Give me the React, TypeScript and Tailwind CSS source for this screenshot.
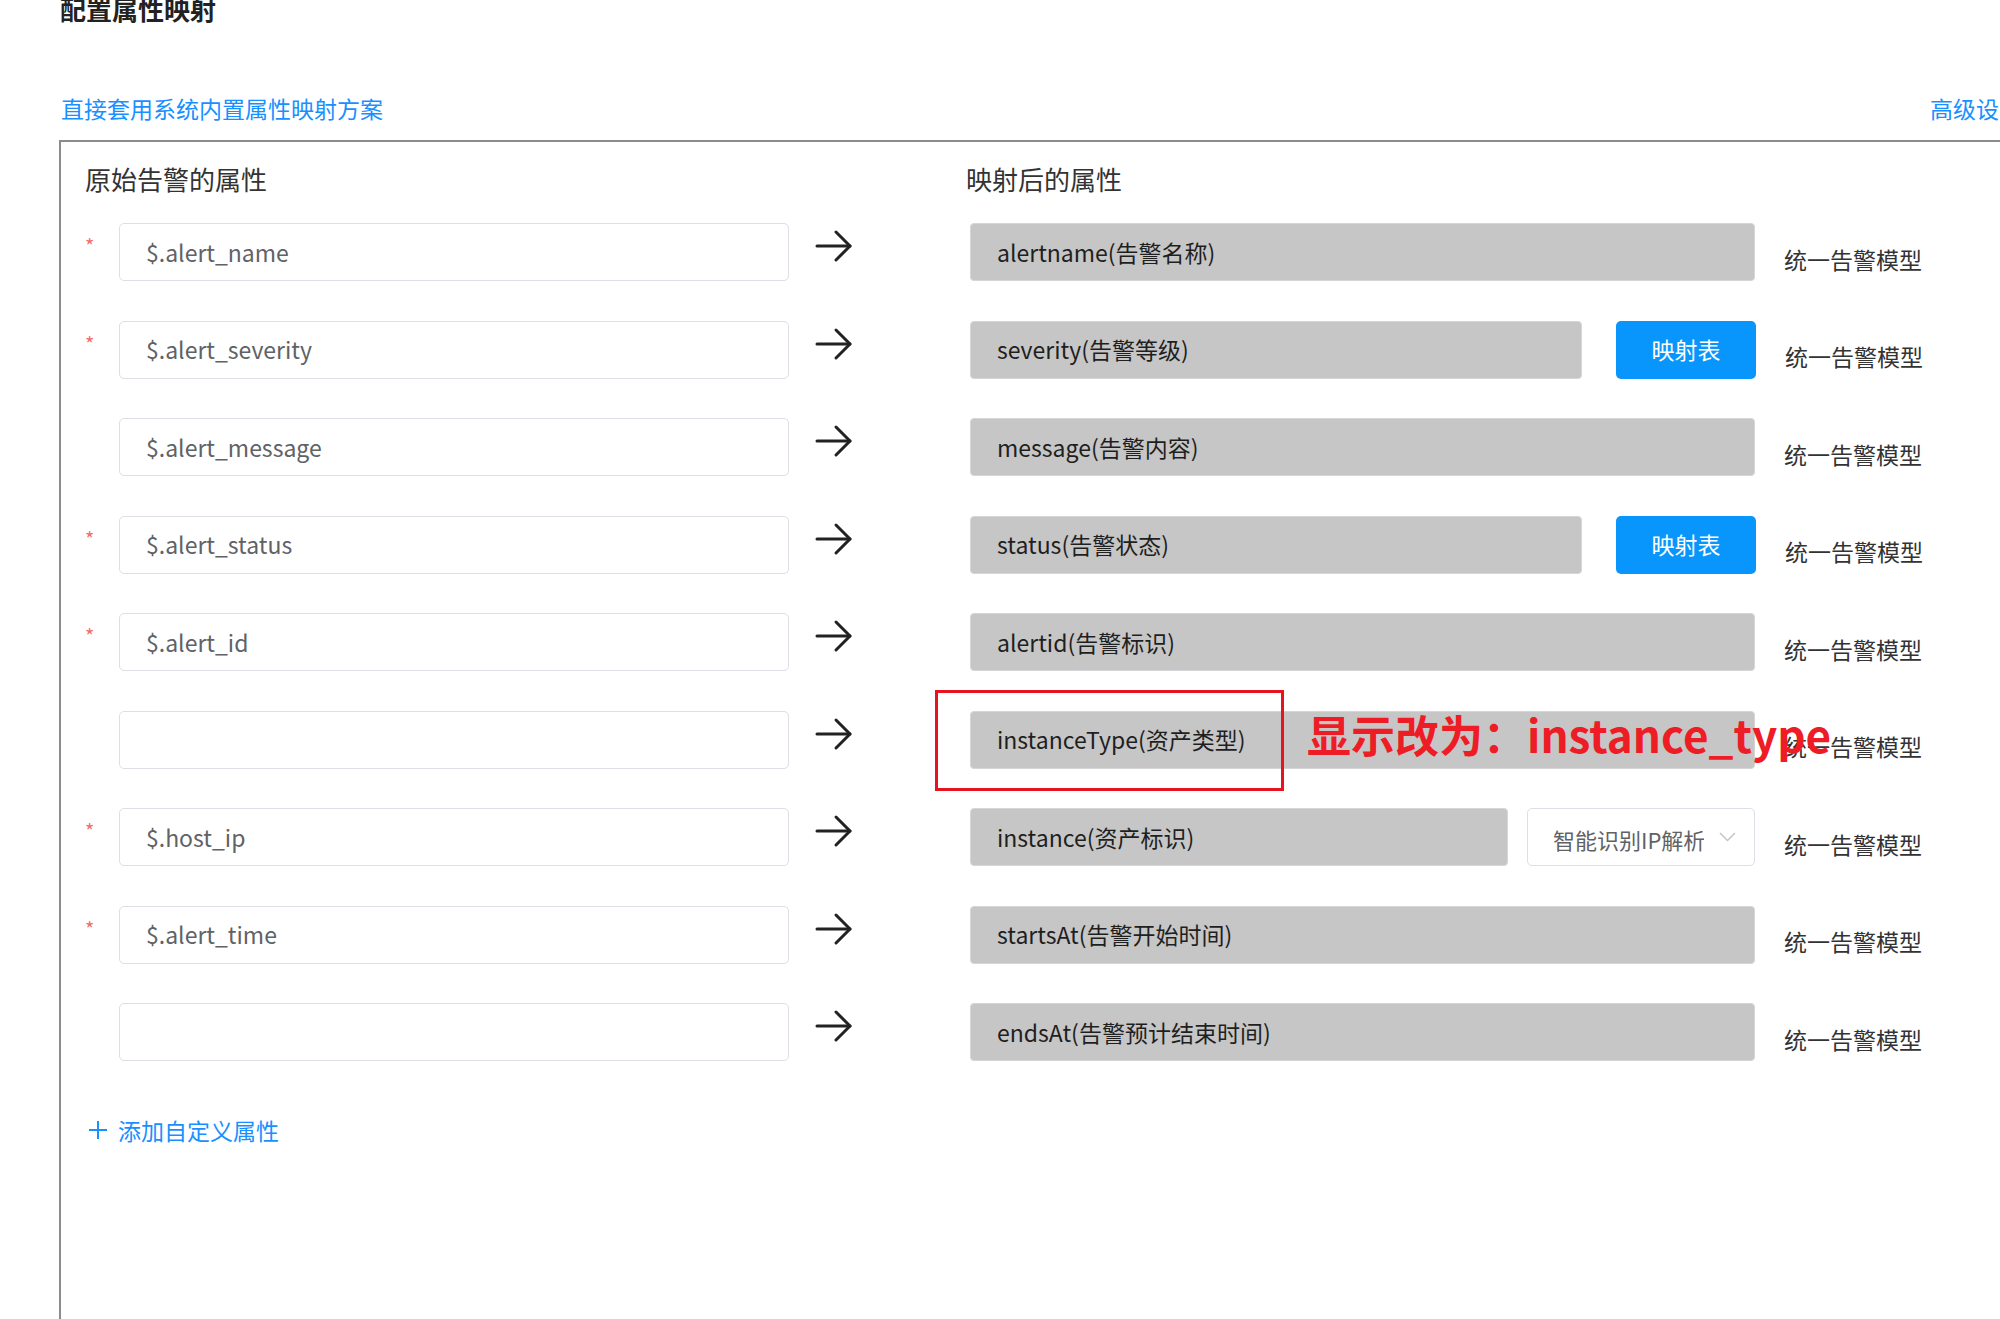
import type React from "react";

type Row = {
  required: boolean;
  source: string;
  target: string;
  extra?: "button" | "select";
};

const rows: Row[] = [
  { required: true, source: "$.alert_name", target: "alertname(告警名称)" },
  { required: true, source: "$.alert_severity", target: "severity(告警等级)", extra: "button" },
  { required: false, source: "$.alert_message", target: "message(告警内容)" },
  { required: true, source: "$.alert_status", target: "status(告警状态)", extra: "button" },
  { required: true, source: "$.alert_id", target: "alertid(告警标识)" },
  { required: false, source: "", target: "instanceType(资产类型)" },
  { required: true, source: "$.host_ip", target: "instance(资产标识)", extra: "select" },
  { required: true, source: "$.alert_time", target: "startsAt(告警开始时间)" },
  { required: false, source: "", target: "endsAt(告警预计结束时间)" },
];

const ArrowRight = () => (
  <svg width="38" height="34" viewBox="0 0 38 34" fill="none" stroke="#222" strokeWidth={3} strokeLinecap="round" strokeLinejoin="round">
    <path d="M2 17h33" />
    <path d="M21 3l14 14-14 14" />
  </svg>
);

const MappingRow: React.FC<{ row: Row }> = ({ row }) => {
  const grayWidth = row.extra === "button" ? "w-[612px]" : row.extra === "select" ? "w-[538px]" : "w-[785px]";

  return (
    <div className="flex items-center h-[58px]">
      <div className="w-[58px] pl-[24px] self-start pt-[13px] text-[20px] leading-[20px] text-[#f56c6c]">
        {row.required ? "*" : ""}
      </div>
      <div className="w-[670px] h-[58px] rounded-[5px] border border-[#dcdfe6] bg-white flex items-center pl-[26px] text-[23px] text-[#606266]">
        {row.source}
      </div>
      <div className="ml-[26px] self-start mt-[6px]">
        <ArrowRight />
      </div>
      <div className={`ml-[117px] h-[58px] ${grayWidth} rounded-[4px] border border-[#d4d6da] bg-[#c6c6c6] flex items-center pl-[26px] text-[23px] text-[#1f1f1f]`}>
        {row.target}
      </div>
      {row.extra === "button" && (
        <button className="ml-[34px] w-[140px] h-[58px] rounded-[5px] bg-[#0896fd] text-white text-[23px] flex items-center justify-center">
          映射表
        </button>
      )}
      {row.extra === "select" && (
        <div className="ml-[19px] w-[228px] h-[58px] rounded-[5px] border border-[#dcdfe6] bg-white flex items-center pl-[25px] pr-[18px]">
          <div className="w-[151px] overflow-hidden whitespace-nowrap text-[22px] text-[#606266] pt-[4px]">智能识别IP解析</div>
          <svg className="ml-auto" width="17" height="10" viewBox="0 0 17 10" fill="none" stroke="#c0c4cc" strokeWidth={1.5}>
            <path d="M1 1l7.5 7.5L16 1" />
          </svg>
        </div>
      )}
      <div className="ml-[29px] mt-[14px] text-[23px] text-[#333] whitespace-nowrap">统一告警模型</div>
    </div>
  );
};

export default function App() {
  return (
    <div
      className="relative w-[2000px] h-[1319px] overflow-hidden bg-white"
      style={{ fontFamily: '"Noto Sans CJK SC", "Noto Sans", sans-serif' }}
    >
      <div className="pl-[60px] -mt-[5px] text-[26px] leading-[28px] font-bold text-[#222]">配置属性映射</div>

      <div className="flex w-[2022px] pl-[61px] mt-[70px] text-[23px] leading-[30px] text-[#1890ff]">
        <span>直接套用系统内置属性映射方案</span>
        <span className="ml-auto">高级设置</span>
      </div>

      <div className="ml-[59px] mt-[17px] w-[2100px] h-[1200px] border-t-2 border-l-2 border-[#8c8c8c]">
        <div className="flex pt-[21px] text-[26px] leading-[32px] text-[#333]">
          <div className="pl-[24px] w-[905px]">原始告警的属性</div>
          <div>映射后的属性</div>
        </div>

        <div className="mt-[28px] flex flex-col gap-[39.5px]">
          {rows.map((row, i) => (
            <MappingRow key={i} row={row} />
          ))}
        </div>

        <div className="mt-[54px] pl-[27px] flex items-center gap-[10px] text-[23px] leading-[30px] text-[#1890ff]">
          <svg width="20" height="20" viewBox="0 0 20 20" fill="none" stroke="#1890ff" strokeWidth={2}>
            <path d="M10 1v18M1 10h18" />
          </svg>
          <span>添加自定义属性</span>
        </div>
      </div>

      <div className="absolute left-[935px] top-[690px] w-[349px] h-[101px] border-[3px] border-[#e8141d]" />
      <div className="absolute left-[1307px] top-[705px] text-[44px] leading-[58px] font-bold text-[#ee1c25] whitespace-nowrap">
        显示改为：instance_type
      </div>
    </div>
  );
}
